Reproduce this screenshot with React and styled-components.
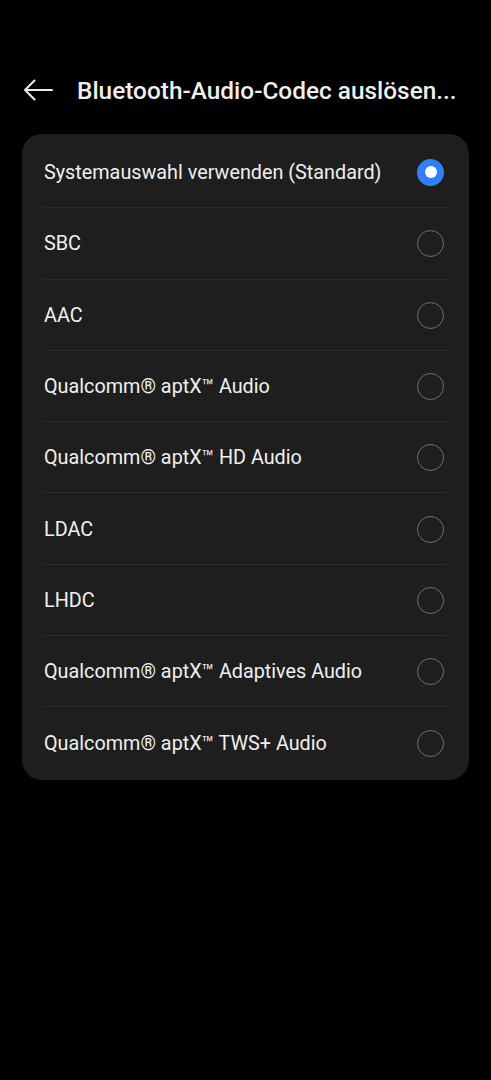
import React, { useState } from 'react';
import styled, { createGlobalStyle } from 'styled-components';

const GlobalStyle = createGlobalStyle`
  html, body {
    margin: 0;
    padding: 0;
    background: #000;
  }
  body {
    font-family: Roboto, "Noto Sans", "Liberation Sans", sans-serif;
    -webkit-font-smoothing: antialiased;
  }
`;

const Screen = styled.div`
  width: 491px;
  height: 1080px;
  background: #000;
  padding-top: 71px;
  box-sizing: border-box;
`;

const Header = styled.div`
  display: flex;
  align-items: center;
  height: 38px;
  padding-left: 23px;
  padding-right: 20px;
`;

const BackButton = styled.button`
  width: 30px;
  height: 30px;
  padding: 0;
  border: none;
  background: none;
  display: flex;
  align-items: center;
  justify-content: center;
  margin-right: 24px;
  cursor: pointer;
`;

const Title = styled.h1`
  margin: 0;
  color: #efefef;
  font-size: 24.4px;
  font-weight: 500;
  white-space: nowrap;
  overflow: hidden;
  text-overflow: ellipsis;
`;

const Card = styled.div`
  margin: 25px 22px 0;
  background: #1e1e1e;
  border-radius: 20px;
  padding: 2px 0;
`;

const Row = styled.label`
  display: flex;
  align-items: center;
  justify-content: space-between;
  height: 71.3px;
  margin: 0 22px;
  padding-top: 1px;
  box-sizing: border-box;
  border-top: ${p => (p.$first ? 'none' : '1px solid #2c2c2c')};
  cursor: pointer;
`;

const Label = styled.span`
  color: #f0f0f0;
  font-size: 19.8px;
`;

const Radio = styled.span`
  width: 27px;
  height: 27px;
  margin-right: 3px;
  border-radius: 50%;
  box-sizing: border-box;
  display: flex;
  align-items: center;
  justify-content: center;
  border: ${p => (p.$checked ? 'none' : '1.7px solid #707070')};
  background: ${p => (p.$checked ? '#2f7ff5' : 'transparent')};

  &::after {
    content: "";
    display: ${p => (p.$checked ? 'block' : 'none')};
    width: 12px;
    height: 12px;
    border-radius: 50%;
    background: #fff;
  }
`;

const codecs = [
  'Systemauswahl verwenden (Standard)',
  'SBC',
  'AAC',
  'Qualcomm® aptX™ Audio',
  'Qualcomm® aptX™ HD Audio',
  'LDAC',
  'LHDC',
  'Qualcomm® aptX™ Adaptives Audio',
  'Qualcomm® aptX™ TWS+ Audio',
];

const BackArrow = () => (
  <svg width="30" height="22" viewBox="0 0 30 22" fill="none">
    <path
      d="M29 11H2M11.5 1.5L2 11l9.5 9.5"
      stroke="#ececec"
      strokeWidth="2"
      strokeLinecap="round"
      strokeLinejoin="round"
    />
  </svg>
);

export default function App() {
  const [selected, setSelected] = useState(0);

  return (
    <>
      <GlobalStyle />
      <Screen>
        <Header>
          <BackButton aria-label="Zurück">
            <BackArrow />
          </BackButton>
          <Title>Bluetooth-Audio-Codec auslösen...</Title>
        </Header>
        <Card>
          {codecs.map((name, i) => (
            <Row key={name} $first={i === 0} onClick={() => setSelected(i)}>
              <Label>{name}</Label>
              <Radio $checked={selected === i} />
            </Row>
          ))}
        </Card>
      </Screen>
    </>
  );
}
